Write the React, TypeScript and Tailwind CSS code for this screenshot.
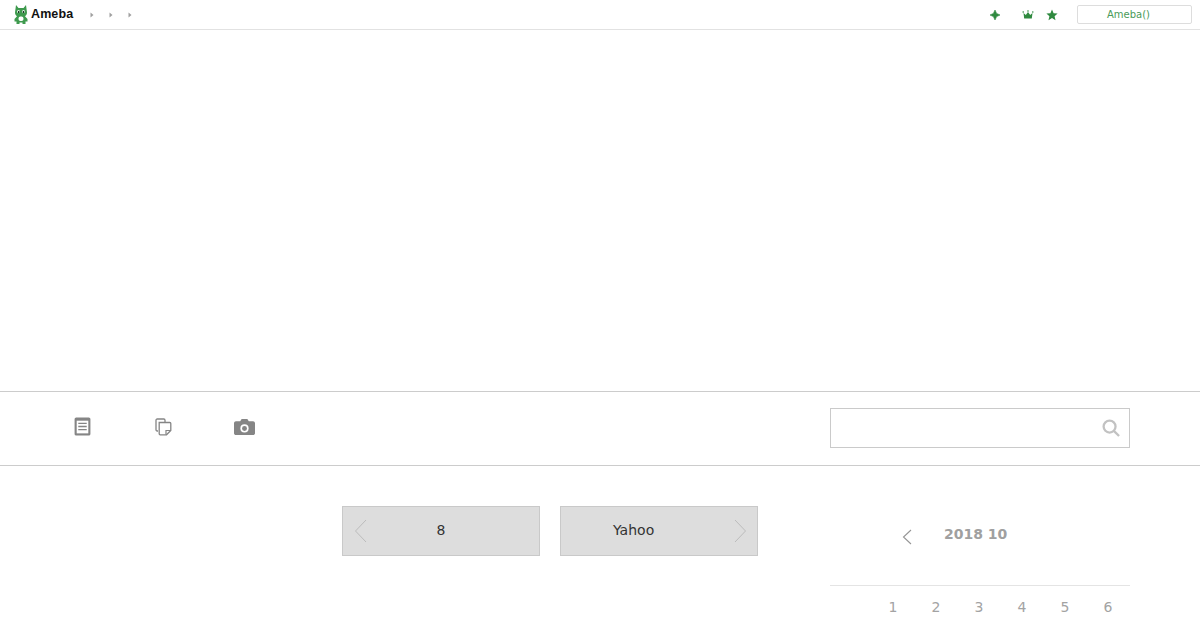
import React from "react";

const dejavu = "font-['DejaVu_Sans',sans-serif]";

function Arrow() {
  return (
    <svg width="4" height="6" viewBox="0 0 4 6" className="block mt-px">
      <path d="M0.5 0.5L3.5 3L0.5 5.5Z" fill="#a0a0a0" />
    </svg>
  );
}

function Frog() {
  return (
    <svg width="14" height="19" viewBox="0 0 14 19" className="block mt-[-1px]">
      <path d="M2 0L4.5 3H9.5L12 0L13 7.5C13 9.5 12.2 10.5 11 11.2L13.5 14V16.5H11.5V19H8.5V17.5H5.5V19H2.5V16.5H.5V14L3 11.2C1.8 10.5 1 9.5 1 7.5Z" fill="#3e9a4e" />
      <rect x="3" y="5" width="3" height="3" rx="1.5" fill="#e8f4ea" />
      <rect x="8" y="5" width="3" height="3" rx="1.5" fill="#e8f4ea" />
      <rect x="4" y="6" width="1.4" height="2" fill="#1b3a24" />
      <rect x="8.8" y="6" width="1.4" height="2" fill="#1b3a24" />
      <rect x="4.5" y="11.5" width="5" height="4.5" rx="2" fill="#fff" />
    </svg>
  );
}

function NavChevron({ dir, size = 24 }: { dir: "left" | "right"; size?: number }) {
  return (
    <svg width="13" height={size} viewBox={`0 0 13 ${size}`} className="block">
      <path
        d={dir === "left" ? `M12 1L1.5 ${size / 2}L12 ${size - 1}` : `M1 1L11.5 ${size / 2}L1 ${size - 1}`}
        fill="none"
        stroke="#bcbcbc"
        strokeWidth="1"
      />
    </svg>
  );
}

export default function App() {
  return (
    <div className={`w-[1200px] h-[630px] overflow-hidden bg-white ${dejavu}`}>
      <header className="h-[30px] border-b border-[#e2e2e2] flex items-center pl-[14px] pr-2">
        <Frog />
        <span className="ml-[3px] text-[12.5px] font-bold text-[#111] font-['Liberation_Sans',sans-serif] tracking-[0.1px] leading-none">
          Ameba
        </span>
        <div className="ml-[17px] flex gap-[15px]">
          <Arrow />
          <Arrow />
          <Arrow />
        </div>
        <div className="ml-auto flex items-center">
          <svg width="12" height="12" viewBox="0 0 12 12" className="block">
            <path d="M6 1L7.6 4.4L11 6L7.6 7.6L6 11L4.4 7.6L1 6L4.4 4.4Z" fill="#2f8a3f" stroke="#2f8a3f" strokeWidth="0.6" />
          </svg>
          <svg width="12" height="10" viewBox="0 0 12 10" className="block ml-[21px]">
            <path d="M1.5 3L3.8 5L6 2L8.2 5L10.5 3L9.8 8.5H2.2Z" fill="#2f8a3f" />
            <circle cx="1.2" cy="2" r="0.8" fill="#2f8a3f" />
            <circle cx="6" cy="1" r="0.8" fill="#2f8a3f" />
            <circle cx="10.8" cy="2" r="0.8" fill="#2f8a3f" />
          </svg>
          <svg width="12" height="12" viewBox="0 0 12 12" className="block ml-3">
            <path d="M6 .5L7.6 4.2L11.6 4.6L8.6 7.2L9.5 11.2L6 9.1L2.5 11.2L3.4 7.2L.4 4.6L4.4 4.2Z" fill="#2f8a3f" />
          </svg>
          <div className="ml-[19px] w-[115px] h-[19px] border border-[#dddddd] rounded-[2px] flex items-center justify-center pr-3 text-[10px] text-[#4a9a58]">
            Ameba()
          </div>
        </div>
      </header>

      <div className="h-[361px]" />

      <section className="h-[75px] border-y border-[#cccccc] flex items-center pl-[74px] pr-[70px] pb-[2px]">
        <svg width="17" height="19" viewBox="0 0 16 18" className="block mt-[-2px]">
          <rect x="0.5" y="0.5" width="15" height="17" rx="1.5" fill="#858585" />
          <rect x="2.5" y="3.5" width="11" height="12" fill="#fff" />
          <path d="M4 6H12M4 9H12M4 12H12" stroke="#858585" strokeWidth="1.2" />
        </svg>
        <svg width="17" height="18" viewBox="0 0 17 18" className="block ml-[64px] mt-[-2px]">
          <path d="M3 13H2.2C1.5 13 1 12.5 1 11.8V2.2C1 1.5 1.5 1 2.2 1H8.8C9.5 1 10 1.5 10 2.2V4" fill="none" stroke="#858585" strokeWidth="1.3" />
          <path d="M4.2 4.5H14.8C15.4 4.5 15.8 4.9 15.8 5.5V12.5L11.5 16.8H5.2C4.6 16.8 4.2 16.4 4.2 15.8Z" fill="#fff" stroke="#858585" strokeWidth="1.3" />
          <path d="M11 16.5V12.5H15.5" fill="none" stroke="#858585" strokeWidth="1.2" />
        </svg>
        <svg width="21" height="18" viewBox="0 0 22 18" className="block ml-[62px] mt-[-1px]">
          <path d="M2 3H6.5L8 .5H14L15.5 3H20C21 3 22 4 22 5V15.5C22 16.5 21 17.5 20 17.5H2C1 17.5 0 16.5 0 15.5V5C0 4 1 3 2 3Z" fill="#858585" />
          <circle cx="11" cy="10.5" r="4.3" fill="#fff" />
          <circle cx="11" cy="10.5" r="2.6" fill="#858585" />
        </svg>
        <div className="ml-auto w-[300px] h-10 border border-[#cacaca] flex items-center justify-end pr-[9px]">
          <svg width="18" height="18" viewBox="0 0 19 19" className="block">
            <circle cx="8" cy="8" r="6.3" fill="none" stroke="#c2c2c2" strokeWidth="2.4" />
            <path d="M12.5 12.5L18 18" stroke="#c2c2c2" strokeWidth="2.4" />
          </svg>
        </div>
      </section>

      <main className="flex pl-[342px] pr-[70px] pt-10">
        <div className="flex gap-5 h-[50px]">
          <div className="w-[198px] h-[50px] bg-[#dddddd] border border-[#c9c9c9] flex items-center pl-[11px] relative">
            <NavChevron dir="left" />
            <span className="absolute inset-x-0 top-[15px] text-center text-sm leading-[17px] text-[#333]">8</span>
          </div>
          <div className="w-[198px] h-[50px] bg-[#dddddd] border border-[#c9c9c9] flex items-center justify-end pr-[10px] relative">
            <span className="absolute left-[52px] top-[15px] text-sm leading-[17px] text-[#333]">Yahoo</span>
            <NavChevron dir="right" />
          </div>
        </div>

        <aside className="ml-auto w-[300px]">
          <div className="h-[80px] border-b border-[#e4e4e4] flex items-start pl-[72px] pt-[18px]">
            <svg width="10" height="16" viewBox="0 0 10 16" className="block mt-[5px]">
              <path d="M9 1L1.5 8L9 15" fill="none" stroke="#959595" strokeWidth="1.1" />
            </svg>
            <span className="ml-[32px] text-sm font-bold leading-5 text-[#a0a0a0]">2018 10</span>
          </div>
          <div className="grid grid-cols-7 w-[301px] ml-[-1.5px] pt-[11px] text-sm leading-[20px] text-[#a3a3a3] text-center">
            <span />
            <span>1</span>
            <span>2</span>
            <span>3</span>
            <span>4</span>
            <span>5</span>
            <span>6</span>
          </div>
        </aside>
      </main>
    </div>
  );
}
